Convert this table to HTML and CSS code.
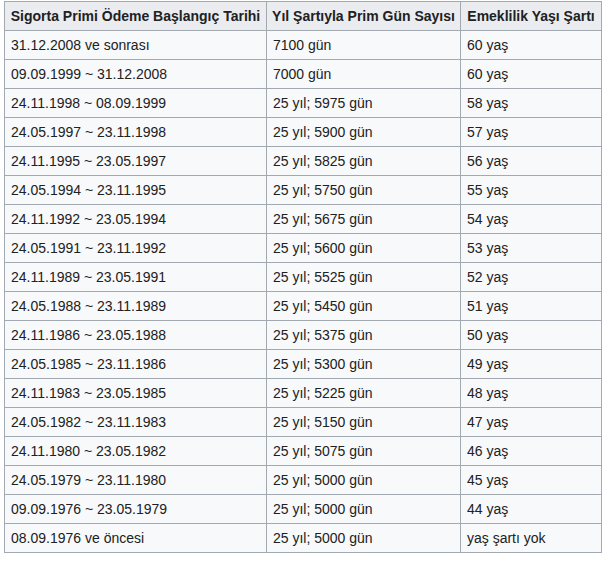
FILE: index.html
```
<!DOCTYPE html>
<html lang="tr">
<head>
<meta charset="utf-8">
<link rel="stylesheet" href="styles.css">
</head>
<body>
<table class="wikitable">
<colgroup><col class="c1"><col class="c2"><col class="c3"></colgroup>
<thead>
<tr><th>Sigorta Primi Ödeme Başlangıç Tarihi</th><th>Yıl Şartıyla Prim Gün Sayısı</th><th>Emeklilik Yaşı Şartı</th></tr>
</thead>
<tbody>
<tr><td>31.12.2008 ve sonrası</td><td>7100 gün</td><td>60 yaş</td></tr>
<tr><td>09.09.1999 ~ 31.12.2008</td><td>7000 gün</td><td>60 yaş</td></tr>
<tr><td>24.11.1998 ~ 08.09.1999</td><td>25 yıl; 5975 gün</td><td>58 yaş</td></tr>
<tr><td>24.05.1997 ~ 23.11.1998</td><td>25 yıl; 5900 gün</td><td>57 yaş</td></tr>
<tr><td>24.11.1995 ~ 23.05.1997</td><td>25 yıl; 5825 gün</td><td>56 yaş</td></tr>
<tr><td>24.05.1994 ~ 23.11.1995</td><td>25 yıl; 5750 gün</td><td>55 yaş</td></tr>
<tr><td>24.11.1992 ~ 23.05.1994</td><td>25 yıl; 5675 gün</td><td>54 yaş</td></tr>
<tr><td>24.05.1991 ~ 23.11.1992</td><td>25 yıl; 5600 gün</td><td>53 yaş</td></tr>
<tr><td>24.11.1989 ~ 23.05.1991</td><td>25 yıl; 5525 gün</td><td>52 yaş</td></tr>
<tr><td>24.05.1988 ~ 23.11.1989</td><td>25 yıl; 5450 gün</td><td>51 yaş</td></tr>
<tr><td>24.11.1986 ~ 23.05.1988</td><td>25 yıl; 5375 gün</td><td>50 yaş</td></tr>
<tr><td>24.05.1985 ~ 23.11.1986</td><td>25 yıl; 5300 gün</td><td>49 yaş</td></tr>
<tr><td>24.11.1983 ~ 23.05.1985</td><td>25 yıl; 5225 gün</td><td>48 yaş</td></tr>
<tr><td>24.05.1982 ~ 23.11.1983</td><td>25 yıl; 5150 gün</td><td>47 yaş</td></tr>
<tr><td>24.11.1980 ~ 23.05.1982</td><td>25 yıl; 5075 gün</td><td>46 yaş</td></tr>
<tr><td>24.05.1979 ~ 23.11.1980</td><td>25 yıl; 5000 gün</td><td>45 yaş</td></tr>
<tr><td>09.09.1976 ~ 23.05.1979</td><td>25 yıl; 5000 gün</td><td>44 yaş</td></tr>
<tr><td>08.09.1976 ve öncesi</td><td>25 yıl; 5000 gün</td><td>yaş şartı yok</td></tr>
</tbody>
</table>
</body>
</html>
```
FILE: styles.css
```
html, body {
  margin: 0;
  padding: 0;
  background: #ffffff;
}
body {
  padding: 1px 0 0 4px;
  font-family: "Liberation Sans", Arial, sans-serif;
  font-size: 14px;
  color: #202122;
}
.wikitable {
  border-collapse: collapse;
  table-layout: fixed;
  width: 597px;
  background: #f8f9fa;
  border: 1px solid #a2a9b1;
  color: #202122;
}
.wikitable th,
.wikitable td {
  border: 1px solid #a2a9b1;
  padding: 0 5px 0 6px;
  height: 28px;
  text-align: left;
  white-space: nowrap;
  line-height: 16px;
}
.wikitable th {
  background: #eaecf0;
  font-weight: bold;
  text-align: center;
  padding: 0 2px;
}
.c1 { width: 262px; }
.c2 { width: 194px; }
.c3 { width: 141px; }
```
